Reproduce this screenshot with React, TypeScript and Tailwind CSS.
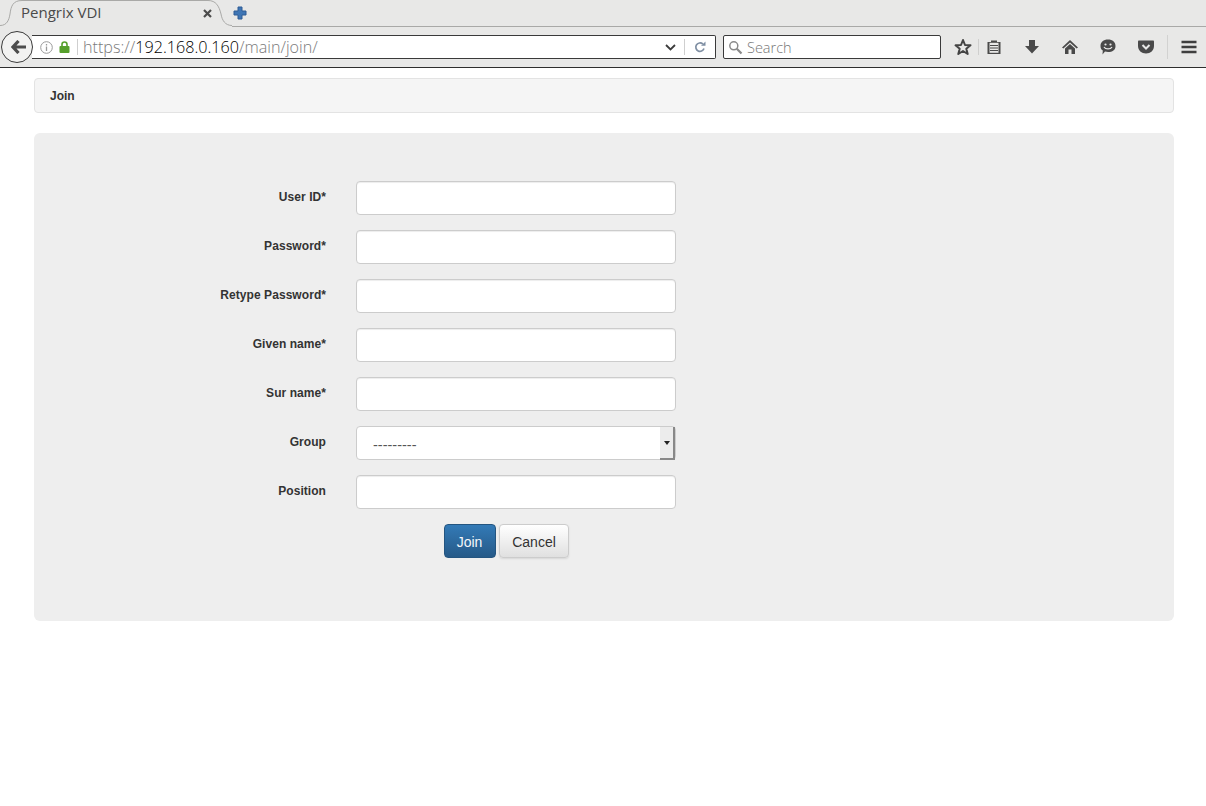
import type { ReactNode } from "react";

const fields = [
  { label: "User ID*" },
  { label: "Password*" },
  { label: "Retype Password*" },
  { label: "Given name*" },
  { label: "Sur name*" },
  { label: "Group", select: true },
  { label: "Position" },
];

function TabStrip() {
  return (
    <div className="relative flex h-[27px] items-start border-b border-[#a9a9a7] bg-[#e8e8e7]">
      {/* tab outline */}
      <svg className="absolute left-0 top-0" width="232" height="27" viewBox="0 0 232 27">
        <path
          d="M0 26 C8 26 9 21 10 14 C11 6 13 0 22 0 L208 0 C216 0 218 6 220 14 C221 21 224 26 232 26 L232 27 L0 27 Z"
          fill="#e8e8e7"
        />
        <path
          d="M0 25.5 C7 25.5 9 20 10 14 C11 6 13 0.5 22 0.5 L208 0.5 C216 0.5 219 6 221 14 C222 20 225 25.5 232 25.5"
          fill="none"
          stroke="#a9a9a7"
        />
      </svg>
      <span className="relative ml-[21px] mt-[1px] w-[182px] font-['Open_Sans',sans-serif] text-[15px] leading-[22px] text-[#4a4a4a]">
        Pengrix VDI
      </span>
      <svg className="relative mt-[9px]" width="9" height="9" viewBox="0 0 9 9">
        <path d="M1 1 L8 8 M8 1 L1 8" stroke="#4b4b4b" strokeWidth="2.2" />
      </svg>
      <svg className="relative ml-[21px] mt-[6px]" width="14" height="14" viewBox="0 0 14 14">
        <path d="M5 1 H9 V5 H13 V9 H9 V13 H5 V9 H1 V5 H5 Z" fill="#3f76b5" stroke="#2f5d96" strokeLinejoin="round" />
      </svg>
    </div>
  );
}

function ToolIcon({ children, className = "" }: { children: ReactNode; className?: string }) {
  return (
    <svg className={className} width="18" height="18" viewBox="0 0 18 18">
      {children}
    </svg>
  );
}

function Toolbar() {
  return (
    <div className="flex h-[41px] items-center border-b border-[#2e2e2e] bg-[#e8e8e7]">
      <div className="relative z-10 ml-[1px] flex h-[32px] w-[32px] items-center justify-center rounded-full border border-[#3a3a3a] bg-[#f2f2f1]">
        <svg className="ml-[3px]" width="16" height="14" viewBox="0 0 16 14">
          <path d="M7.5 1 L2 7 L7.5 13 M2.5 7 H15" fill="none" stroke="#4d4d4d" strokeWidth="3.2" />
        </svg>
      </div>
      <div className="-ml-[1px] flex h-[24px] w-[684px] items-center rounded-r-[2px] border border-[#3a3a3a] border-l-0 bg-white">
        <svg className="ml-[8px]" width="13" height="13" viewBox="0 0 13 13">
          <circle cx="6.5" cy="6.5" r="5.8" fill="none" stroke="#9a9a9a" />
          <path d="M6.5 5.5 V10 M6.5 3 V4.5" stroke="#9a9a9a" strokeWidth="1.3" />
        </svg>
        <svg className="ml-[6px]" width="11" height="12" viewBox="0 0 11 12">
          <path d="M3 5 V3.5 a2.5 2.5 0 0 1 5 0 V5" fill="none" stroke="#57a02c" strokeWidth="1.6" />
          <rect x="0.5" y="5" width="10" height="7" rx="1" fill="#57a02c" />
        </svg>
        <span className="ml-[7px] h-[16px] w-px bg-[#cfcfcf]" />
        <span className="ml-[5px] whitespace-nowrap font-['Open_Sans',sans-serif] text-[16.15px] font-light leading-[22px] text-black">
          <span className="text-[#7b7b7b]">https://</span>192.168.0.160<span className="text-[#7b7b7b]">/main/join/</span>
        </span>
        <svg className="ml-auto" width="11" height="7" viewBox="0 0 11 7">
          <path d="M1 1 L5.5 5.5 L10 1" fill="none" stroke="#3c3c3c" strokeWidth="1.8" />
        </svg>
        <span className="ml-[8px] h-[16px] w-px bg-[#cfcfcf]" />
        <svg className="ml-[9px] mr-[9px]" width="12" height="12" viewBox="0 0 12 12">
          <path d="M10 7.5 A4.2 4.2 0 1 1 8.8 3" fill="none" stroke="#7f8fa3" strokeWidth="1.7" />
          <path d="M7 4.8 H11.5 V0.5 Z" fill="#7f8fa3" />
        </svg>
      </div>
      <div className="ml-[7px] flex h-[24px] w-[218px] items-center rounded-[2px] border border-[#3a3a3a] bg-white">
        <svg className="ml-[4px]" width="15" height="15" viewBox="0 0 15 15">
          <circle cx="5.8" cy="5.8" r="4" fill="none" stroke="#8a8a8a" strokeWidth="1.5" />
          <path d="M8.8 8.8 L13.5 13.5" stroke="#8a8a8a" strokeWidth="2.2" />
        </svg>
        <span className="ml-[4px] pt-[1px] font-['Open_Sans',sans-serif] text-[14.5px] font-light text-[#777777]">Search</span>
      </div>
      <ToolIcon className="ml-[13px]">
        <path d="M9 2 L11 7 L16.5 7.3 L12.3 10.7 L13.7 16 L9 13 L4.3 16 L5.7 10.7 L1.5 7.3 L7 7 Z" fill="none" stroke="#444444" strokeWidth="2" strokeLinejoin="round" />
      </ToolIcon>
      <span className="ml-[6px] h-[16px] w-px bg-[#cfcfce]" />
      <ToolIcon className="ml-[6px]">
        <path d="M2.5 4 H6 V2.5 H12 V4 H15.5 V16 H2.5 Z" fill="#4a4a4a" />
        <path d="M4.5 4.8 H13.5 V14.8 H4.5 Z" fill="#e8e8e7" />
        <path d="M5 7.5 H13 M5 10 H13 M5 12.5 H13" stroke="#4a4a4a" strokeWidth="1.2" />
      </ToolIcon>
      <ToolIcon className="ml-[20px]">
        <path d="M6 2 H12 V8 H16 L9 15.5 L2 8 H6 Z" fill="#4a4a4a" />
      </ToolIcon>
      <ToolIcon className="ml-[20px]">
        <path d="M9 2 L17 9.5 L15.6 10.5 L9 4.6 L2.4 10.5 L1 9.5 Z" fill="#4a4a4a" />
        <path d="M4 10.5 L9 6 L14 10.5 V16 H10.5 V11.5 H7.5 V16 H4 Z" fill="#4a4a4a" />
      </ToolIcon>
      <ToolIcon className="ml-[20px]">
        <path d="M9 1.5 C13.5 1.5 16.5 4 16.5 8 C16.5 12 13.5 14 9 14 C8 14 7 14 6 13.6 L3.5 16.5 L3.8 12.5 C2.2 11.5 1.5 10 1.5 8 C1.5 4 4.5 1.5 9 1.5 Z" fill="#4a4a4a" />
        <circle cx="6.5" cy="6.5" r="1.1" fill="#e8e8e7" />
        <circle cx="11.5" cy="6.5" r="1.1" fill="#e8e8e7" />
        <path d="M5 9 C6.5 11.5 11.5 11.5 13 9" fill="none" stroke="#e8e8e7" strokeWidth="1.3" />
      </ToolIcon>
      <ToolIcon className="ml-[20px]">
        <path d="M2 2.5 H16 C16.6 2.5 17 3 17 3.5 V8 C17 12.5 13.5 15.5 9 15.5 C4.5 15.5 1 12.5 1 8 V3.5 C1 3 1.4 2.5 2 2.5 Z" fill="#4a4a4a" />
        <path d="M5.5 7 L9 10.5 L12.5 7" fill="none" stroke="#e8e8e7" strokeWidth="2" />
      </ToolIcon>
      <span className="ml-[12px] h-[24px] w-px bg-[#d2d2d1]" />
      <ToolIcon className="ml-[12px]">
        <path d="M1.5 4 H16.5 M1.5 9 H16.5 M1.5 14 H16.5" stroke="#3f3f3f" strokeWidth="2.4" />
      </ToolIcon>
    </div>
  );
}

function JoinForm() {
  return (
    <div className="mt-5 h-[488px] rounded-[6px] bg-[#eeeeee] pt-[48px]">
      <div className="flex flex-col gap-[15px]">
        {fields.map((field) => (
          <div key={field.label} className="flex h-[34px] items-start">
            <label className="w-[292px] shrink-0 pt-[9px] text-right text-[12px] font-bold leading-[14px] tracking-[0.06px] text-[#333333]">
              {field.label}
            </label>
            {field.select ? (
              <div className="ml-[30px] flex h-[34px] w-[320px] items-stretch rounded-[4px] border border-[#cccccc] bg-white">
                <span className="flex-1 pl-[16px] pt-[9px] text-[14.5px] leading-[18px] text-[#555555]">---------</span>
                <span className="mb-[-1px] flex w-[15px] items-center justify-center border-b-2 border-r-2 border-[#888888] bg-[#ececec]">
                  <svg width="6" height="4" viewBox="0 0 6 4">
                    <path d="M0 0 H6 L3 4 Z" fill="#222222" />
                  </svg>
                </span>
              </div>
            ) : (
              <input
                type="text"
                className="ml-[30px] h-[34px] w-[320px] rounded-[4px] border border-[#cccccc] bg-white shadow-[inset_0_1px_1px_rgba(0,0,0,0.075)]"
              />
            )}
          </div>
        ))}
      </div>
      <div className="ml-[410px] mt-[15px] flex gap-[3px]">
        <button className="h-[34px] w-[52px] rounded-[4px] border border-[#245580] bg-gradient-to-b from-[#337ab7] to-[#265a88] pr-[1px] pt-[2px] text-[14px] text-[#f4f7fa]">
          Join
        </button>
        <button className="h-[34px] w-[70px] rounded-[4px] border border-[#cccccc] bg-gradient-to-b from-white to-[#e0e0e0] pt-[2px] text-[14px] text-[#333333] shadow-[0_1px_2px_rgba(0,0,0,0.1)]">
          Cancel
        </button>
      </div>
    </div>
  );
}

export default function App() {
  return (
    <div className="min-h-[806px] bg-white font-['Liberation_Sans',Arial,sans-serif]">
      <TabStrip />
      <Toolbar />
      <div className="pl-[34px] pr-[32px] pt-[10px]">
        <div className="flex h-[35px] items-center rounded-[4px] border border-[#e3e3e3] bg-[#f5f5f5] px-[15px] text-[12px] font-bold text-[#333333]">
          Join
        </div>
        <JoinForm />
      </div>
    </div>
  );
}
